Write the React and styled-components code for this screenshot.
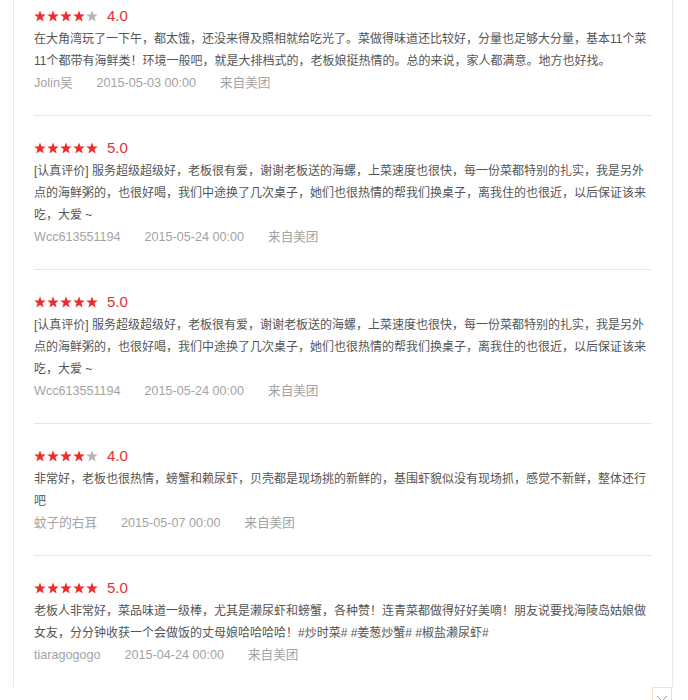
import React from 'react';
import styled, { createGlobalStyle } from 'styled-components';

const GlobalStyle = createGlobalStyle`
  html, body {
    margin: 0;
    padding: 0;
    background: #fff;
  }
  body {
    font-family: "Liberation Sans", "Noto Sans CJK SC", Arial, sans-serif;
    overflow: hidden;
  }
`;

const Panel = styled.div`
  box-sizing: border-box;
  width: 660px;
  min-height: 100vh;
  margin-left: 13px;
  padding: 0 20px;
  border-left: 1px solid #e8e8e8;
  border-right: 1px solid #e8e8e8;
  background: #fff;
`;

const List = styled.ul`
  list-style: none;
  margin: -16px 0 0;
  padding: 0;
`;

const Item = styled.li`
  padding: 19px 0 21px;
  border-bottom: 1px solid #e6e6e6;

  &:last-child {
    border-bottom: none;
  }
`;

const RatingRow = styled.div`
  display: flex;
  align-items: center;
  height: 25px;
`;

const Stars = styled.span`
  display: flex;
  gap: 1px;
  margin-right: 9px;
`;

const Score = styled.span`
  font-size: 15px;
  color: #e5302f;
  line-height: 25px;
`;

const Body = styled.p`
  margin: 0;
  font-size: 12px;
  line-height: 22px;
  color: #555;
`;

const Meta = styled.div`
  display: flex;
  font-size: 12.6px;
  line-height: 22px;
  color: #a3a3a3;

  span {
    margin-right: 24px;
  }
`;

const TopButton = styled.button`
  position: fixed;
  right: 16px;
  bottom: -8px;
  box-sizing: border-box;
  width: 20px;
  height: 21px;
  padding: 7px 0 0;
  border: 1px solid #f2dfcf;
  background: #fff;
  display: flex;
  align-items: flex-start;
  justify-content: center;
  cursor: pointer;
`;

const Star = ({ on }) => (
  <svg width="12" height="12" viewBox="0 0 24 24">
    <polygon
      points="12,1 15,9 23.5,9.2 16.8,14.5 19.2,23 12,18 4.8,23 7.2,14.5 0.5,9.2 9,9"
      fill={on ? '#ee2a2a' : '#b4b4b4'}
    />
  </svg>
);

const reviews = [
  {
    score: 4,
    text: '在大角湾玩了一下午，都太饿，还没来得及照相就给吃光了。菜做得味道还比较好，分量也足够大分量，基本11个菜11个都带有海鲜类！环境一般吧，就是大排档式的，老板娘挺热情的。总的来说，家人都满意。地方也好找。',
    user: 'Jolin吴',
    date: '2015-05-03 00:00',
  },
  {
    score: 5,
    text: '[认真评价] 服务超级超级好，老板很有爱，谢谢老板送的海螺，上菜速度也很快，每一份菜都特别的扎实，我是另外点的海鲜粥的，也很好喝，我们中途换了几次桌子，她们也很热情的帮我们换桌子，离我住的也很近，以后保证该来吃，大爱 ~',
    user: 'Wcc613551194',
    date: '2015-05-24 00:00',
  },
  {
    score: 5,
    text: '[认真评价] 服务超级超级好，老板很有爱，谢谢老板送的海螺，上菜速度也很快，每一份菜都特别的扎实，我是另外点的海鲜粥的，也很好喝，我们中途换了几次桌子，她们也很热情的帮我们换桌子，离我住的也很近，以后保证该来吃，大爱 ~',
    user: 'Wcc613551194',
    date: '2015-05-24 00:00',
  },
  {
    score: 4,
    text: '非常好，老板也很热情，螃蟹和赖尿虾，贝壳都是现场挑的新鲜的，基围虾貌似没有现场抓，感觉不新鲜，整体还行吧',
    user: '蚊子的右耳',
    date: '2015-05-07 00:00',
  },
  {
    score: 5,
    text: '老板人非常好，菜品味道一级棒，尤其是濑尿虾和螃蟹，各种赞！连青菜都做得好好美嘀！朋友说要找海陵岛姑娘做女友，分分钟收获一个会做饭的丈母娘哈哈哈哈！#炒时菜# #姜葱炒蟹# #椒盐濑尿虾#',
    user: 'tiaragogogo',
    date: '2015-04-24 00:00',
  },
];

const App = () => {
  return (
    <>
      <GlobalStyle />
      <Panel>
        <List>
          {reviews.map((r, i) => (
            <Item key={i}>
              <RatingRow>
                <Stars>
                  {[1, 2, 3, 4, 5].map((n) => (
                    <Star key={n} on={n <= r.score} />
                  ))}
                </Stars>
                <Score>{r.score.toFixed(1)}</Score>
              </RatingRow>
              <Body>{r.text}</Body>
              <Meta>
                <span>{r.user}</span>
                <span>{r.date}</span>
                <span>来自美团</span>
              </Meta>
            </Item>
          ))}
        </List>
      </Panel>
      <TopButton aria-label="收起">
        <svg width="12" height="7" viewBox="0 0 12 7">
          <polyline points="1,1 6,6 11,1" fill="none" stroke="#9a9a9a" strokeWidth="1" />
        </svg>
      </TopButton>
    </>
  );
};

export default App;
